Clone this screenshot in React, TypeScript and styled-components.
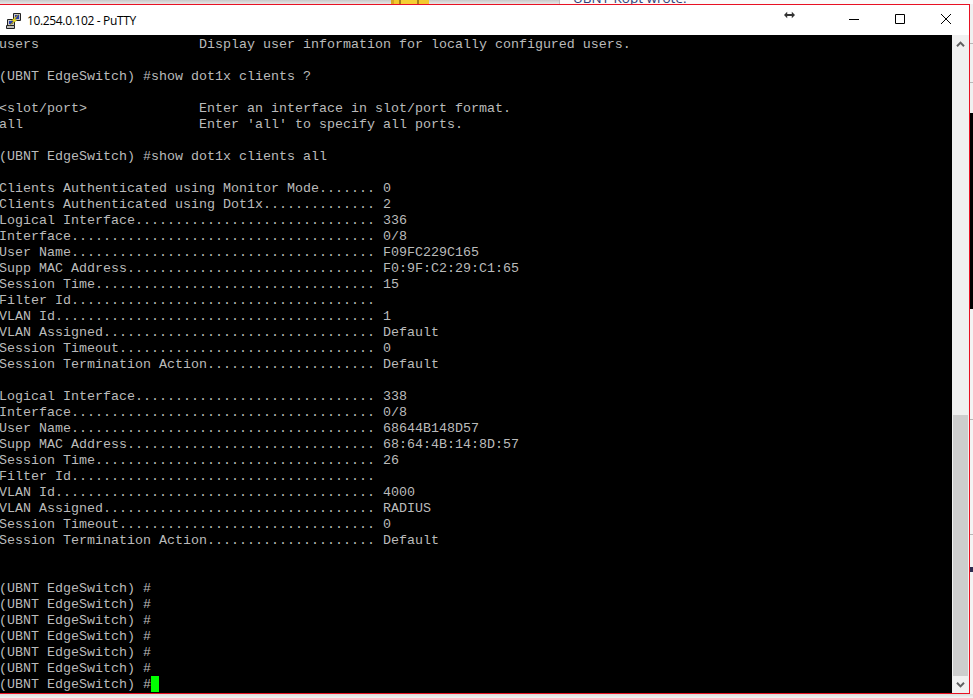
import React from 'react';
import styled, { createGlobalStyle } from 'styled-components';

const GlobalStyle = createGlobalStyle`
  html, body {
    margin: 0;
    padding: 0;
    height: 100%;
    overflow: hidden;
    background: #f2f2f2;
  }
`;

const Desktop = styled.div`
  display: flex;
  flex-direction: column;
  width: 973px;
  height: 698px;
  overflow: hidden;
`;

const BrowserStrip = styled.div`
  display: flex;
  flex: 0 0 4px;
  height: 4px;
  overflow: hidden;
  background: linear-gradient(#c9c9c9, #e6e6e6);
`;

const Mascot = styled.div`
  width: 38px;
  height: 4px;
  margin-left: 391px;
  background: linear-gradient(90deg, #d9a520 0 8%, #f3c92e 8% 20%, #a8801c 20% 26%, #f5cf34 26% 68%, #a8801c 68% 74%, #f3c92e 74%);
`;

const PostPane = styled.div`
  width: 400px;
  margin-left: 130px;
  padding-left: 13px;
  border-left: 1px solid #bdbdbd;
  background: #fafafa;
  font: 13.5px/16px 'Open Sans', sans-serif;
  color: #2f3f78;
  white-space: nowrap;
`;

const PostQuote = styled.div`
  margin-top: -10px;
`;

const Middle = styled.div`
  display: flex;
  flex: 0 0 690px;
`;

const PuttyWindow = styled.div`
  display: flex;
  flex-direction: column;
  width: 970px;
  height: 690px;
  box-sizing: border-box;
  border-top: 1px solid #e81123;
  border-right: 1px solid #e81123;
  border-bottom: 1px solid #e81123;
  background: #fff;
`;

const TitleBar = styled.div`
  position: relative;
  display: flex;
  align-items: center;
  flex: 0 0 30px;
  height: 30px;
  background: #fff;
`;

const AppIcon = styled.svg`
  flex: none;
  width: 16px;
  height: 16px;
  margin: 2px 5px 0 6px;
`;

const WindowTitle = styled.div`
  flex: 1;
  padding-top: 2px;
  font: 12px/16px 'Open Sans', sans-serif;
  letter-spacing: -0.35px;
  color: #000;
`;

const CaptionButton = styled.div`
  display: flex;
  align-items: center;
  justify-content: center;
  width: 46px;
  height: 30px;
  box-sizing: border-box;
  padding-bottom: 2px;
`;

const ResizeCursor = styled.svg`
  position: absolute;
  left: 784px;
  top: 4px;
  width: 11px;
  height: 12px;
`;

const Body = styled.div`
  display: flex;
  flex: 1;
  min-height: 0;
`;

const Terminal = styled.pre`
  flex: 1;
  min-width: 0;
  margin: 0 0 0 -1px;
  padding: 1px 0 0;
  overflow: hidden;
  background: #000;
  color: #bbb;
  font: 13.3333px/18px 'Liberation Mono', 'Courier New', monospace;
`;

const TermLine = styled.div`
  height: 16px;
  white-space: pre;
`;

const TextCursor = styled.span`
  display: inline-block;
  width: 8px;
  height: 16px;
  vertical-align: top;
  background: #00ff00;
`;

const Scrollbar = styled.div`
  display: flex;
  flex-direction: column;
  flex: 0 0 17px;
  background: #f0f0f0;
`;

const ScrollButton = styled.div`
  display: flex;
  align-items: center;
  justify-content: center;
  flex: 0 0 17px;
`;

const ScrollTrack = styled.div`
  display: flex;
  flex-direction: column;
  justify-content: flex-end;
  flex: 1;
`;

const ScrollThumb = styled.div`
  height: 261px;
  margin: 0 1px;
  background: #cdcdcd;
`;

const SideStrip = styled.div`
  display: flex;
  flex-direction: column;
  flex: 0 0 3px;
  background: #f4f4f4;
`;

const SideBand = styled.div<{ $h: number; $c: string }>`
  flex: 0 0 ${(p) => p.$h}px;
  background: ${(p) => p.$c};
`;

const BottomStrip = styled.div`
  flex: 1;
  background: linear-gradient(#dcdcdc, #f4f4f4);
`;

const PROMPT = '(UBNT EdgeSwitch) #';

const field = (label: string, value = '') => `${label.padEnd(47, '.')} ${value}`;
const help = (name: string, text: string) => `${name.padEnd(25, ' ')}${text}`;

const LINES: string[] = [
  help('users', 'Display user information for locally configured users.'),
  '',
  `${PROMPT}show dot1x clients ?`,
  '',
  help('<slot/port>', 'Enter an interface in slot/port format.'),
  help('all', "Enter 'all' to specify all ports."),
  '',
  `${PROMPT}show dot1x clients all`,
  '',
  field('Clients Authenticated using Monitor Mode', '0'),
  field('Clients Authenticated using Dot1x', '2'),
  field('Logical Interface', '336'),
  field('Interface', '0/8'),
  field('User Name', 'F09FC229C165'),
  field('Supp MAC Address', 'F0:9F:C2:29:C1:65'),
  field('Session Time', '15'),
  field('Filter Id'),
  field('VLAN Id', '1'),
  field('VLAN Assigned', 'Default'),
  field('Session Timeout', '0'),
  field('Session Termination Action', 'Default'),
  '',
  field('Logical Interface', '338'),
  field('Interface', '0/8'),
  field('User Name', '68644B148D57'),
  field('Supp MAC Address', '68:64:4B:14:8D:57'),
  field('Session Time', '26'),
  field('Filter Id'),
  field('VLAN Id', '4000'),
  field('VLAN Assigned', 'RADIUS'),
  field('Session Timeout', '0'),
  field('Session Termination Action', 'Default'),
  '',
  '',
  PROMPT,
  PROMPT,
  PROMPT,
  PROMPT,
  PROMPT,
  PROMPT,
];

const SIDE_BANDS: [number, string][] = [
  [39, '#f0f0f0'],
  [1, '#b8b8b8'],
  [38, '#f0f0f0'],
  [1, '#b8b8b8'],
  [30, '#f0f0f0'],
  [196, '#000000'],
  [110, '#f4f4f4'],
  [1, '#b8b8b8'],
  [114, '#f4f4f4'],
  [1, '#b8b8b8'],
  [32, '#f4f4f4'],
  [5, '#2c2c50'],
];

function PuttyIcon() {
  return (
    <AppIcon viewBox="0 0 16 16">
      <path d="M7.5.5h7v7h-7z" fill="#c8c8c8" stroke="#222" />
      <path d="M9 2h4v4H9z" fill="#2a3fa8" />
      <path d="M1.5 6.5h7v6h-7z" fill="#c8c8c8" stroke="#222" />
      <path d="M3 8h4v3H3z" fill="#2a3fa8" />
      <path d="M.5 12.5h8v3h-8z" fill="#bdbdbd" stroke="#222" />
      <path d="M12.5 1.5 5.5 7.5l2.2.5-4.2 4.5L11 7.2 8.8 6.6z" fill="#f2e21c" stroke="#8a7a10" strokeWidth="0.4" />
    </AppIcon>
  );
}

function Chevron({ up }: { up?: boolean }) {
  return (
    <svg width="9" height="6" viewBox="0 0 9 6">
      <path d={up ? 'M1 5.2 4.5 1.6 8 5.2' : 'M1 .8 4.5 4.4 8 .8'} fill="none" stroke="#606060" strokeWidth="2" />
    </svg>
  );
}

export default function App() {
  return (
    <Desktop>
      <GlobalStyle />
      <BrowserStrip>
        <Mascot />
        <PostPane>
          <PostQuote>UBNT-Kopt wrote:</PostQuote>
        </PostPane>
      </BrowserStrip>
      <Middle>
        <PuttyWindow>
          <TitleBar>
            <PuttyIcon />
            <WindowTitle>10.254.0.102 - PuTTY</WindowTitle>
            <ResizeCursor viewBox="0 0 12 12">
              <path d="M0 6 3.5 2.5V5h5V2.5L12 6 8.5 9.5V7h-5v2.5z" fill="#333" />
            </ResizeCursor>
            <CaptionButton>
              <svg width="10" height="10" viewBox="0 0 10 10">
                <path d="M0 5.5h10" stroke="#000" />
              </svg>
            </CaptionButton>
            <CaptionButton>
              <svg width="10" height="10" viewBox="0 0 10 10">
                <path d="M.5.5h9v9h-9z" fill="none" stroke="#000" />
              </svg>
            </CaptionButton>
            <CaptionButton>
              <svg width="10" height="10" viewBox="0 0 10 10">
                <path d="M0 0l10 10M10 0 0 10" stroke="#000" />
              </svg>
            </CaptionButton>
          </TitleBar>
          <Body>
            <Terminal>
              {LINES.map((line, i) => (
                <TermLine key={i}>{line}</TermLine>
              ))}
              <TermLine>
                {PROMPT}
                <TextCursor />
              </TermLine>
            </Terminal>
            <Scrollbar>
              <ScrollButton>
                <Chevron up />
              </ScrollButton>
              <ScrollTrack>
                <ScrollThumb />
              </ScrollTrack>
              <ScrollButton>
                <Chevron />
              </ScrollButton>
            </Scrollbar>
          </Body>
        </PuttyWindow>
        <SideStrip>
          {SIDE_BANDS.map(([h, c], i) => (
            <SideBand key={i} $h={h} $c={c} />
          ))}
        </SideStrip>
      </Middle>
      <BottomStrip />
    </Desktop>
  );
}
